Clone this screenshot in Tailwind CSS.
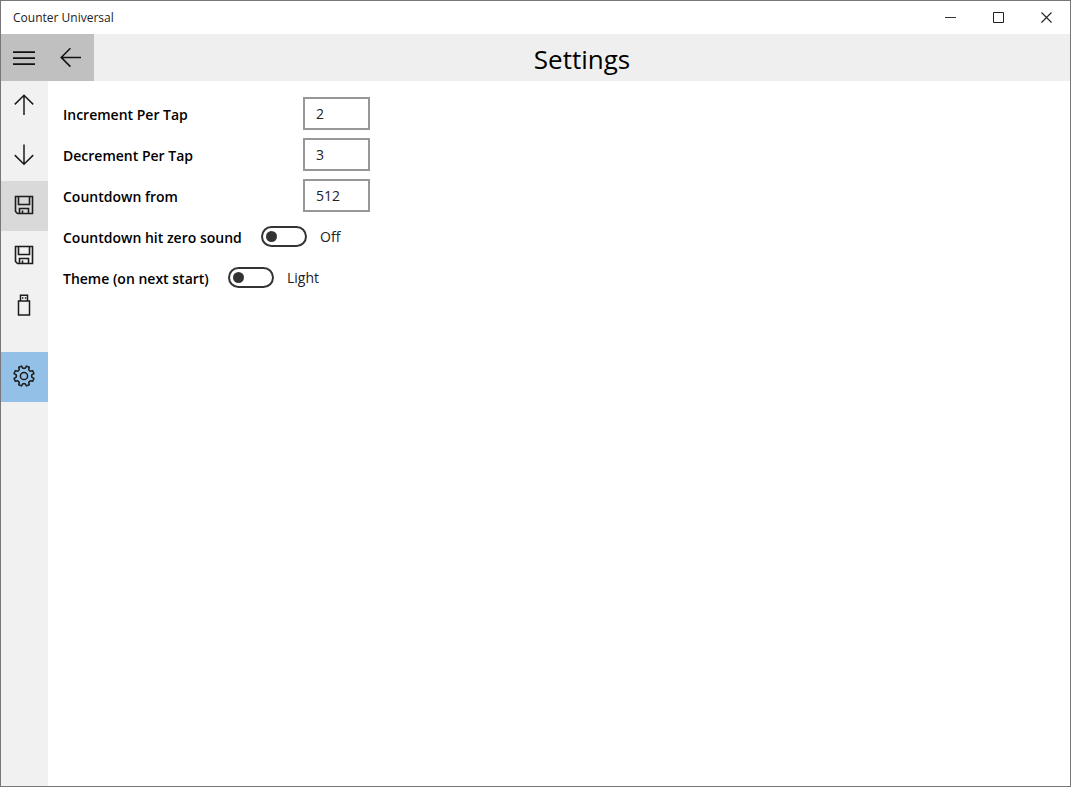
<!DOCTYPE html>
<html lang="en">

<head>
    <meta charset="UTF-8">
    <meta name="viewport" content="width=device-width, initial-scale=1.0">
    <title>Counter Universal</title>

    <!-- Tailwind CSS CDN -->
    <script src="https://cdn.jsdelivr.net/npm/@tailwindcss/browser@4"></script>
</head>
<body class="bg-white">
    <div class="flex flex-col min-h-screen border border-[#77777b] bg-white text-black font-['Open_Sans','Noto_Sans',sans-serif]">
        <!-- Title bar -->
        <div class="flex items-center justify-between h-[33px] pl-3">
            <span class="text-[12px] leading-4 text-[#222222]">Counter Universal</span>
            <div class="flex h-full">
                <button type="button" aria-label="Minimize" class="flex items-center justify-center w-12 h-full hover:bg-gray-200">
                    <svg width="11" height="11" viewBox="0 0 11 11" fill="none" stroke="#333333"><path d="M0 5.5h11" /></svg>
                </button>
                <button type="button" aria-label="Maximize" class="flex items-center justify-center w-12 h-full hover:bg-gray-200">
                    <svg width="11" height="11" viewBox="0 0 11 11" fill="none" stroke="#222222"><path d="M.5.5h10v10H.5z" /></svg>
                </button>
                <button type="button" aria-label="Close" class="flex items-center justify-center w-12 h-full hover:bg-red-600">
                    <svg width="11" height="11" viewBox="0 0 11 11" fill="none" stroke="#222222" stroke-width="1.1"><path d="M.5.5l10 10M10.5.5l-10 10" /></svg>
                </button>
            </div>
        </div>

        <!-- Header -->
        <header class="flex h-[47px] bg-[#efefef]">
            <button type="button" aria-label="Menu" class="flex items-center justify-center w-[47px] h-full pr-0.5 bg-[#c0c0c0]">
                <svg width="22" height="22" viewBox="0 0 22 22" fill="none" stroke="#111111" stroke-width="1.7"><path d="M0 5.2h22M0 11.2h22M0 17.2h22" /></svg>
            </button>
            <button type="button" aria-label="Back" class="flex items-center justify-center w-[46px] h-full bg-[#c0c0c0]">
                <svg width="22" height="22" viewBox="0 0 22 22" fill="none" stroke="#111111" stroke-width="1.5"><path d="M21 10.4H1.2M10.4 1.2L1.2 10.4l9.2 9.2" /></svg>
            </button>
            <h1 class="flex-1 self-center pt-0.5 text-center text-[26px] leading-8">Settings</h1>
        </header>

        <div class="flex flex-1">
            <!-- Side menu -->
            <nav class="flex flex-col w-[47px] bg-[#f1f1f1] text-[#1c1c1c]">
                <button type="button" aria-label="Increment" class="flex items-center justify-center h-[50px] pr-0.5 pb-0.5">
                    <svg width="22" height="22" viewBox="0 0 22 22" fill="none" stroke="currentColor" stroke-width="1.5"><path d="M11 21V1.2M1.8 10.4L11 1.2l9.2 9.2" /></svg>
                </button>
                <button type="button" aria-label="Decrement" class="flex items-center justify-center h-[50px] pr-0.5 pb-0.5">
                    <svg width="22" height="22" viewBox="0 0 22 22" fill="none" stroke="currentColor" stroke-width="1.5"><path d="M11 .5v19.8M1.8 11.1l9.2 9.2 9.2-9.2" /></svg>
                </button>
                <button type="button" aria-label="Save" class="flex items-center justify-center h-[50px] pr-0.5 pb-0.5 bg-[#d9d9d9]">
                    <svg width="20" height="20" viewBox="0 0 20 20" fill="none" stroke="currentColor" stroke-width="1.6"><path d="M1.5 1.5h17v17H3.5l-2-2zM4.5 1.5v8h11v-8M5.5 18.5v-5h9v5M8.5 18v-2.500" /></svg>
                </button>
                <button type="button" aria-label="Save as" class="flex items-center justify-center h-[50px] pr-0.5 pb-0.5">
                    <svg width="20" height="20" viewBox="0 0 20 20" fill="none" stroke="currentColor" stroke-width="1.6"><path d="M1.5 1.5h17v17H3.5l-2-2zM4.5 1.5v8h11v-8M5.5 18.5v-5h9v5M8.5 18v-2.500" /></svg>
                </button>
                <button type="button" aria-label="USB drive" class="flex items-center justify-center h-[50px] pr-0.5 pb-0.5">
                    <svg width="14" height="22" viewBox="0 0 14 22" fill="none" stroke="currentColor" stroke-width="1.5"><path d="M3.500 7V1.300h7V7M1.500 7h11v14h-11zM5 4h1.400M7.800 4h1.400" /></svg>
                </button>
                <button type="button" aria-label="Settings" class="flex items-center justify-center h-[50px] pr-0.5 pb-0.5 mt-[21px] bg-[#92c0e6]">
                    <svg width="22" height="22" viewBox="-11 -11 22 22" fill="none" stroke="currentColor" stroke-width="1.5" stroke-linejoin="round">
                        <path d="M7.72 -1.09V1.09L9.9 2.47L8.74 5.25L6.23 4.69L4.69 6.23L5.25 8.74L2.47 9.9L1.09 7.72H-1.09L-2.47 9.9L-5.25 8.74L-4.69 6.23L-6.23 4.69L-8.74 5.25L-9.9 2.47L-7.72 1.09V-1.09L-9.9 -2.47L-8.74 -5.25L-6.23 -4.69L-4.69 -6.23L-5.25 -8.74L-2.47 -9.9L-1.09 -7.72H1.09L2.47 -9.9L5.25 -8.74L4.69 -6.23L6.23 -4.69L8.74 -5.25L9.9 -2.47Z" />
                        <circle r="3.6" />
                    </svg>
                </button>
            </nav>

            <!-- Settings form -->
            <main class="flex-1 pl-[15px] pr-4 py-3">
                <form class="flex flex-col text-[14px] leading-5">
                    <div class="flex items-center h-[41px]">
                        <label for="increment" class="w-60 pt-0.5 font-semibold">Increment Per Tap</label>
                        <input type="text" id="increment" value="2" class="w-[67px] h-[33px] px-[11px] border-2 border-[#979797] bg-white text-[#222222] outline-none">
                    </div>
                    <div class="flex items-center h-[41px]">
                        <label for="decrement" class="w-60 pt-0.5 font-semibold">Decrement Per Tap</label>
                        <input type="text" id="decrement" value="3" class="w-[67px] h-[33px] px-[11px] border-2 border-[#979797] bg-white text-[#222222] outline-none">
                    </div>
                    <div class="flex items-center h-[41px]">
                        <label for="countdown" class="w-60 pt-0.5 font-semibold">Countdown from</label>
                        <input type="text" id="countdown" value="512" class="w-[67px] h-[33px] px-[11px] border-2 border-[#979797] bg-white text-[#222222] outline-none">
                    </div>
                    <div class="flex items-center h-[41px]">
                        <label for="sound" class="w-[198px] pt-0.5 font-semibold">Countdown hit zero sound</label>
                        <input type="checkbox" role="switch" id="sound" class="appearance-none flex items-center w-[46px] h-[21px] px-[3px] rounded-full border-2 border-[#333333] before:size-[11px] before:rounded-full before:bg-[#333333] checked:justify-end">
                        <span class="pl-[13px] text-[#222222]">Off</span>
                    </div>
                    <div class="flex items-center h-[41px]">
                        <label for="theme" class="w-[165px] pt-0.5 font-semibold">Theme (on next start)</label>
                        <input type="checkbox" role="switch" id="theme" class="appearance-none flex items-center w-[46px] h-[21px] px-[3px] rounded-full border-2 border-[#333333] before:size-[11px] before:rounded-full before:bg-[#333333] checked:justify-end">
                        <span class="pl-[13px] text-[#222222]">Light</span>
                    </div>
                </form>
            </main>
        </div>
    </div>
</body>

</html>
